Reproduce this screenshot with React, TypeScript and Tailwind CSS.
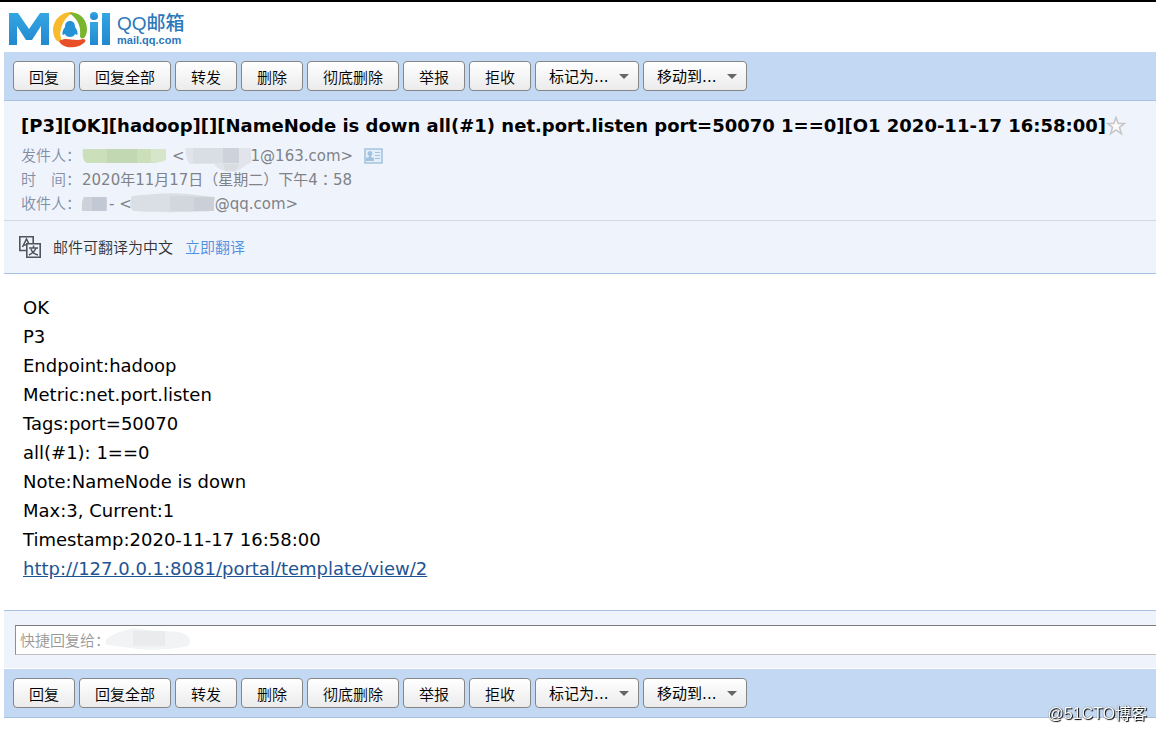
import type { ReactNode } from "react";

const FONT = "font-['DejaVu_Sans','Noto_Sans_CJK_SC',sans-serif] font-normal";
const CJK = "font-['Noto_Sans_CJK_SC',sans-serif] font-[350]";

const ACTIONS = ["回复", "回复全部", "转发", "删除", "彻底删除", "举报", "拒收"];
const MENUS = [
  { name: "mark", text: "标记为..." },
  { name: "move", text: "移动到..." },
];

const BODY_LINES = [
  "OK",
  "P3",
  "Endpoint:hadoop",
  "Metric:net.port.listen",
  "Tags:port=50070",
  "all(#1): 1==0",
  "Note:NameNode is down",
  "Max:3, Current:1",
  "Timestamp:2020-11-17 16:58:00",
];

const BODY_LINK = "http://127.0.0.1:8081/portal/template/view/2";

const Logo = () => (
  <a href="#" className="flex h-[50px] items-start gap-1 pt-[9px] pl-2" aria-label="QQ邮箱">
    <svg width="105" height="38" viewBox="0 0 105 38">
      <defs>
        <linearGradient id="logoBlue" x1="0" y1="0" x2="0" y2="1">
          <stop offset="0" stopColor="#35a5e2" />
          <stop offset="1" stopColor="#2089d0" />
        </linearGradient>
      </defs>
      <path d="M1 2h9l11 16L32 2h9v32h-8V15L24 29h-6L9 15v19H1z" fill="url(#logoBlue)" />
      <path d="M66 1C54 0 45 8 45 19c0 5 2 9 4 11 2 1 5 0 4-3-1-3-1-6 0-9 2-8 6-13 13-17z" fill="#f8bb2d" />
      <path d="M61 2c10-2 18 6 18 16 0 4-1 7-3 9-2 1-4 0-4-2 1-10-2-17-11-23z" fill="#7ab52f" />
      <path d="M51 30c8-5 14 1 24-2 2 0 3 1 2 3-5 5-13 6-18 5-4-1-7-3-8-6z" fill="#e8502a" />
      <path
        d="M62 10c-3 0-5 2-5 6-3 4-3 7-2 8l2-1c1 4 9 4 10 0l2 1c1-1 1-4-2-8 0-4-2-6-5-6z"
        fill="#2592d6"
      />
      <path d="M82 11h8v23h-8z" fill="url(#logoBlue)" />
      <circle cx="86" cy="5" r="4" fill="url(#logoBlue)" />
      <path d="M94 2h8v32h-8z" fill="url(#logoBlue)" />
    </svg>
    <span className="flex flex-col pt-px font-['Liberation_Sans','Noto_Sans_CJK_SC',sans-serif] text-[#2b78bb]">
      <span className="h-[22px] text-[19px] leading-[24px] font-medium">QQ邮箱</span>
      <span className="text-[11px] leading-[13px] font-bold">mail.qq.com</span>
    </span>
  </a>
);

const buttonStyle =
  "h-[30px] cursor-pointer rounded-[4px] border border-[#868686] bg-linear-to-b from-white to-[#ebebeb] pt-px text-[15px] leading-[28px] text-black";

const Toolbar = ({ id }: { id: string }) => (
  <div className="flex flex-wrap gap-1 border-b border-[#a8c1de] bg-[#c3d9f3] px-[9px] py-[9px]">
    {ACTIONS.map((text) => (
      <button key={text} type="button" className={`${buttonStyle} ${CJK} px-[15px]`}>
        {text}
      </button>
    ))}
    {MENUS.map(({ name, text }) => (
      <div key={name} className="relative">
        <select
          name={`${id}-${name}`}
          aria-label={text}
          className={`${buttonStyle} ${FONT} w-[104px] appearance-none pl-[13px]`}
        >
          <option>{text}</option>
        </select>
        <svg
          className="pointer-events-none absolute top-[13px] right-[10px]"
          width="10"
          height="5"
          viewBox="0 0 10 5"
        >
          <path d="M0 0h10L5 5z" fill="#666" />
        </svg>
      </div>
    ))}
  </div>
);

const MetaRow = ({ label, children }: { label: ReactNode; children: ReactNode }) => (
  <div className="flex h-6 items-center">
    <dt className="flex w-[61px] font-[350] text-[#7f8ea6]">{label}</dt>
    <dd className="flex items-center">{children}</dd>
  </div>
);

const SenderMask = () => (
  <svg width="86" height="18" viewBox="0 0 86 18">
    <path d="M1 2h82v11c-5 3-12 3-20 3H6c-5 0-6-8-5-14z" fill="#cbdfba" />
    <path d="M25 2h30v14H25z" fill="#c2d8b2" />
    <path d="M69 2h15v11l-5 2H69z" fill="#d6e6cb" />
  </svg>
);

const AddressMask = () => (
  <svg className="overflow-visible" width="66" height="18" viewBox="0 0 66 18">
    <path d="M0 1h66v15c-6 1-9 7-17 9-9 0-17-3-20-8H5c-3-3-4-9-5-16z" fill="#e1e5eb" />
    <path d="M8 1h30v15H8z" fill="#d9dde4" />
    <path d="M38 1h16v15H38z" fill="#ced2da" />
    <path d="M38 17h16l-3 6-11 1z" fill="#d9dde2" />
  </svg>
);

const ReceiverMask = () => (
  <svg width="27" height="18" viewBox="0 0 27 18">
    <path d="M2 2h23v14H-2c0-4 2-10 4-14z" fill="#cdd2da" />
    <path d="M10 2h14v14H10z" fill="#c3c9d4" />
  </svg>
);

const ReceiverAddressMask = () => (
  <svg className="overflow-visible" width="83" height="18" viewBox="0 0 83 18">
    <path d="M0 1c20-2 35-4 56-2l27 3-2 14c-24 1-47 2-80 0-4-5-3-10-1-15z" fill="#dadfe5" />
    <path d="M38 1h24v15H38z" fill="#d2d6dd" />
    <path d="M62 2h20v14H62z" fill="#cbcfd8" />
  </svg>
);

const CardIcon = () => (
  <svg width="19" height="16" viewBox="0 0 19 16">
    <path d="M1 1h17v14H1z" fill="#e3eef8" stroke="#a5c4dc" strokeWidth="1.6" />
    <path d="M6 3c3 0 3 4 1 5v1l3 1v3H2v-3l3-1V8C3 7 3 3 6 3z" fill="#a1c3df" />
    <path d="M11 4.5h5M11 7.5h5M11 10.5h5" stroke="#a1c3df" />
  </svg>
);

const TranslateIcon = () => (
  <svg width="22" height="22" viewBox="0 0 22 22" fill="none" stroke="#50555d">
    <path d="M7 14.5H.8V.8h13.4V7" strokeWidth="1.6" />
    <path d="M3.5 11L7.5 3l2.5 5M5 9h2.5" strokeWidth="1.6" />
    <path d="M7.8 7.8h13.4v13.4H7.8z" strokeWidth="1.6" />
    <path d="M14.5 9.5V12M10 12h9M17 12c-1 3-3 5-7 7M12 13c1 3 3 5 7 6" strokeWidth="1.5" />
  </svg>
);

const Star = () => (
  <svg width="20" height="20" viewBox="0 0 20 20">
    <path
      d="M10 1.5l2.2 6h6.3l-5 3.9 1.9 6.3-5.4-3.8-5.4 3.8 1.9-6.3-5-3.9h6.3z"
      fill="#fafafa"
      stroke="#c6c6c6"
      strokeWidth="1.6"
    />
  </svg>
);

const MailHeader = () => (
  <header className="border-b border-[#d3d9e0] bg-[#eff4fc] pt-[13px] pl-[17px]">
    <div className="flex items-center">
      <h1 className="text-[18px] leading-[24px] font-bold whitespace-nowrap text-black">
        [P3][OK][hadoop][][NameNode is down all(#1) net.port.listen port=50070 1==0][O1 2020-11-17
        16:58:00]
      </h1>
      <button type="button" aria-label="星标" className="cursor-pointer">
        <Star />
      </button>
    </div>
    <dl className="flex flex-col pt-[6px] pb-[4px] text-[15px] leading-[24px] text-[#7f8287]">
      <MetaRow label="发件人：">
        <SenderMask />
        <span className="pl-1">&lt;</span>
        <AddressMask />
        <span>1@163.com&gt;</span>
        <button type="button" aria-label="联系人" className="ml-[11px] cursor-pointer">
          <CardIcon />
        </button>
      </MetaRow>
      <MetaRow
        label={
          <>
            <span className="pr-[15px]">时</span>间：
          </>
        }
      >
        <span>
          2020年11月17日（星期二）下午4
          <span className="font-['Noto_Sans_CJK_TC',sans-serif] leading-none">：</span>
          58
        </span>
      </MetaRow>
      <MetaRow label="收件人：">
        <ReceiverMask />
        <span>- &lt;</span>
        <ReceiverAddressMask />
        <span>@qq.com&gt;</span>
      </MetaRow>
    </dl>
  </header>
);

const App = () => {
  return (
    <div className={`${FONT} border-t-2 border-black bg-white pb-[14px]`}>
      <Logo />
      <main className="ml-1">
        <Toolbar id="top" />
        <MailHeader />
        <div
          className={`${CJK} flex h-[53px] items-center border-b border-[#a8c1de] bg-[#eff4fc] pl-[15px] text-[15px] text-[#333]`}
        >
          <TranslateIcon />
          <span className="ml-3">邮件可翻译为中文</span>
          <a href="#" className="ml-3 text-[#4f8fdf]">
            立即翻译
          </a>
        </div>

        <article className="px-[19px] pt-[19px] pb-[27px] text-[18px] leading-[29px] text-black">
          {BODY_LINES.map((line) => (
            <p key={line}>{line}</p>
          ))}
          <a href={BODY_LINK} className="text-[#1e5494] underline">
            {BODY_LINK}
          </a>
        </article>

        <div className="border-t border-b border-t-[#a8c1de] border-b-white bg-[#eff4fc] pt-[14px] pb-[13px] pl-[11px]">
          <div className="relative">
            <input
              type="text"
              aria-label="快捷回复"
              placeholder="快捷回复给："
              className={`${CJK} block h-[30px] w-full border border-r-0 border-t-[#7b7b7b] border-b-[#bfbfbf] border-l-[#8f8f8f] bg-white pb-0.5 pl-1 text-[15px] placeholder:text-[#999]`}
            />
            <svg
              className="pointer-events-none absolute top-[3px] left-[90px]"
              width="86"
              height="22"
              viewBox="0 0 86 22"
            >
              <path d="M1 12C8 4 20 3 28 0c12 2 30 3 46 4 9 2 14 8 9 14-18 4-35 4-50 3L3 17c-3-1-3-3-2-5z" fill="#f2f3f4" />
              <path d="M28 3h32v15H28z" fill="#eaebec" />
            </svg>
          </div>
        </div>
        <Toolbar id="bottom" />
      </main>
      <div className="fixed right-[9px] bottom-[7px] font-['Liberation_Sans','Noto_Sans_CJK_SC',sans-serif] text-[16px] leading-[22px] text-white [text-shadow:1px_1px_1px_#000,0_0_1px_#444]">
        @51CTO博客
      </div>
    </div>
  );
};

export default App;
